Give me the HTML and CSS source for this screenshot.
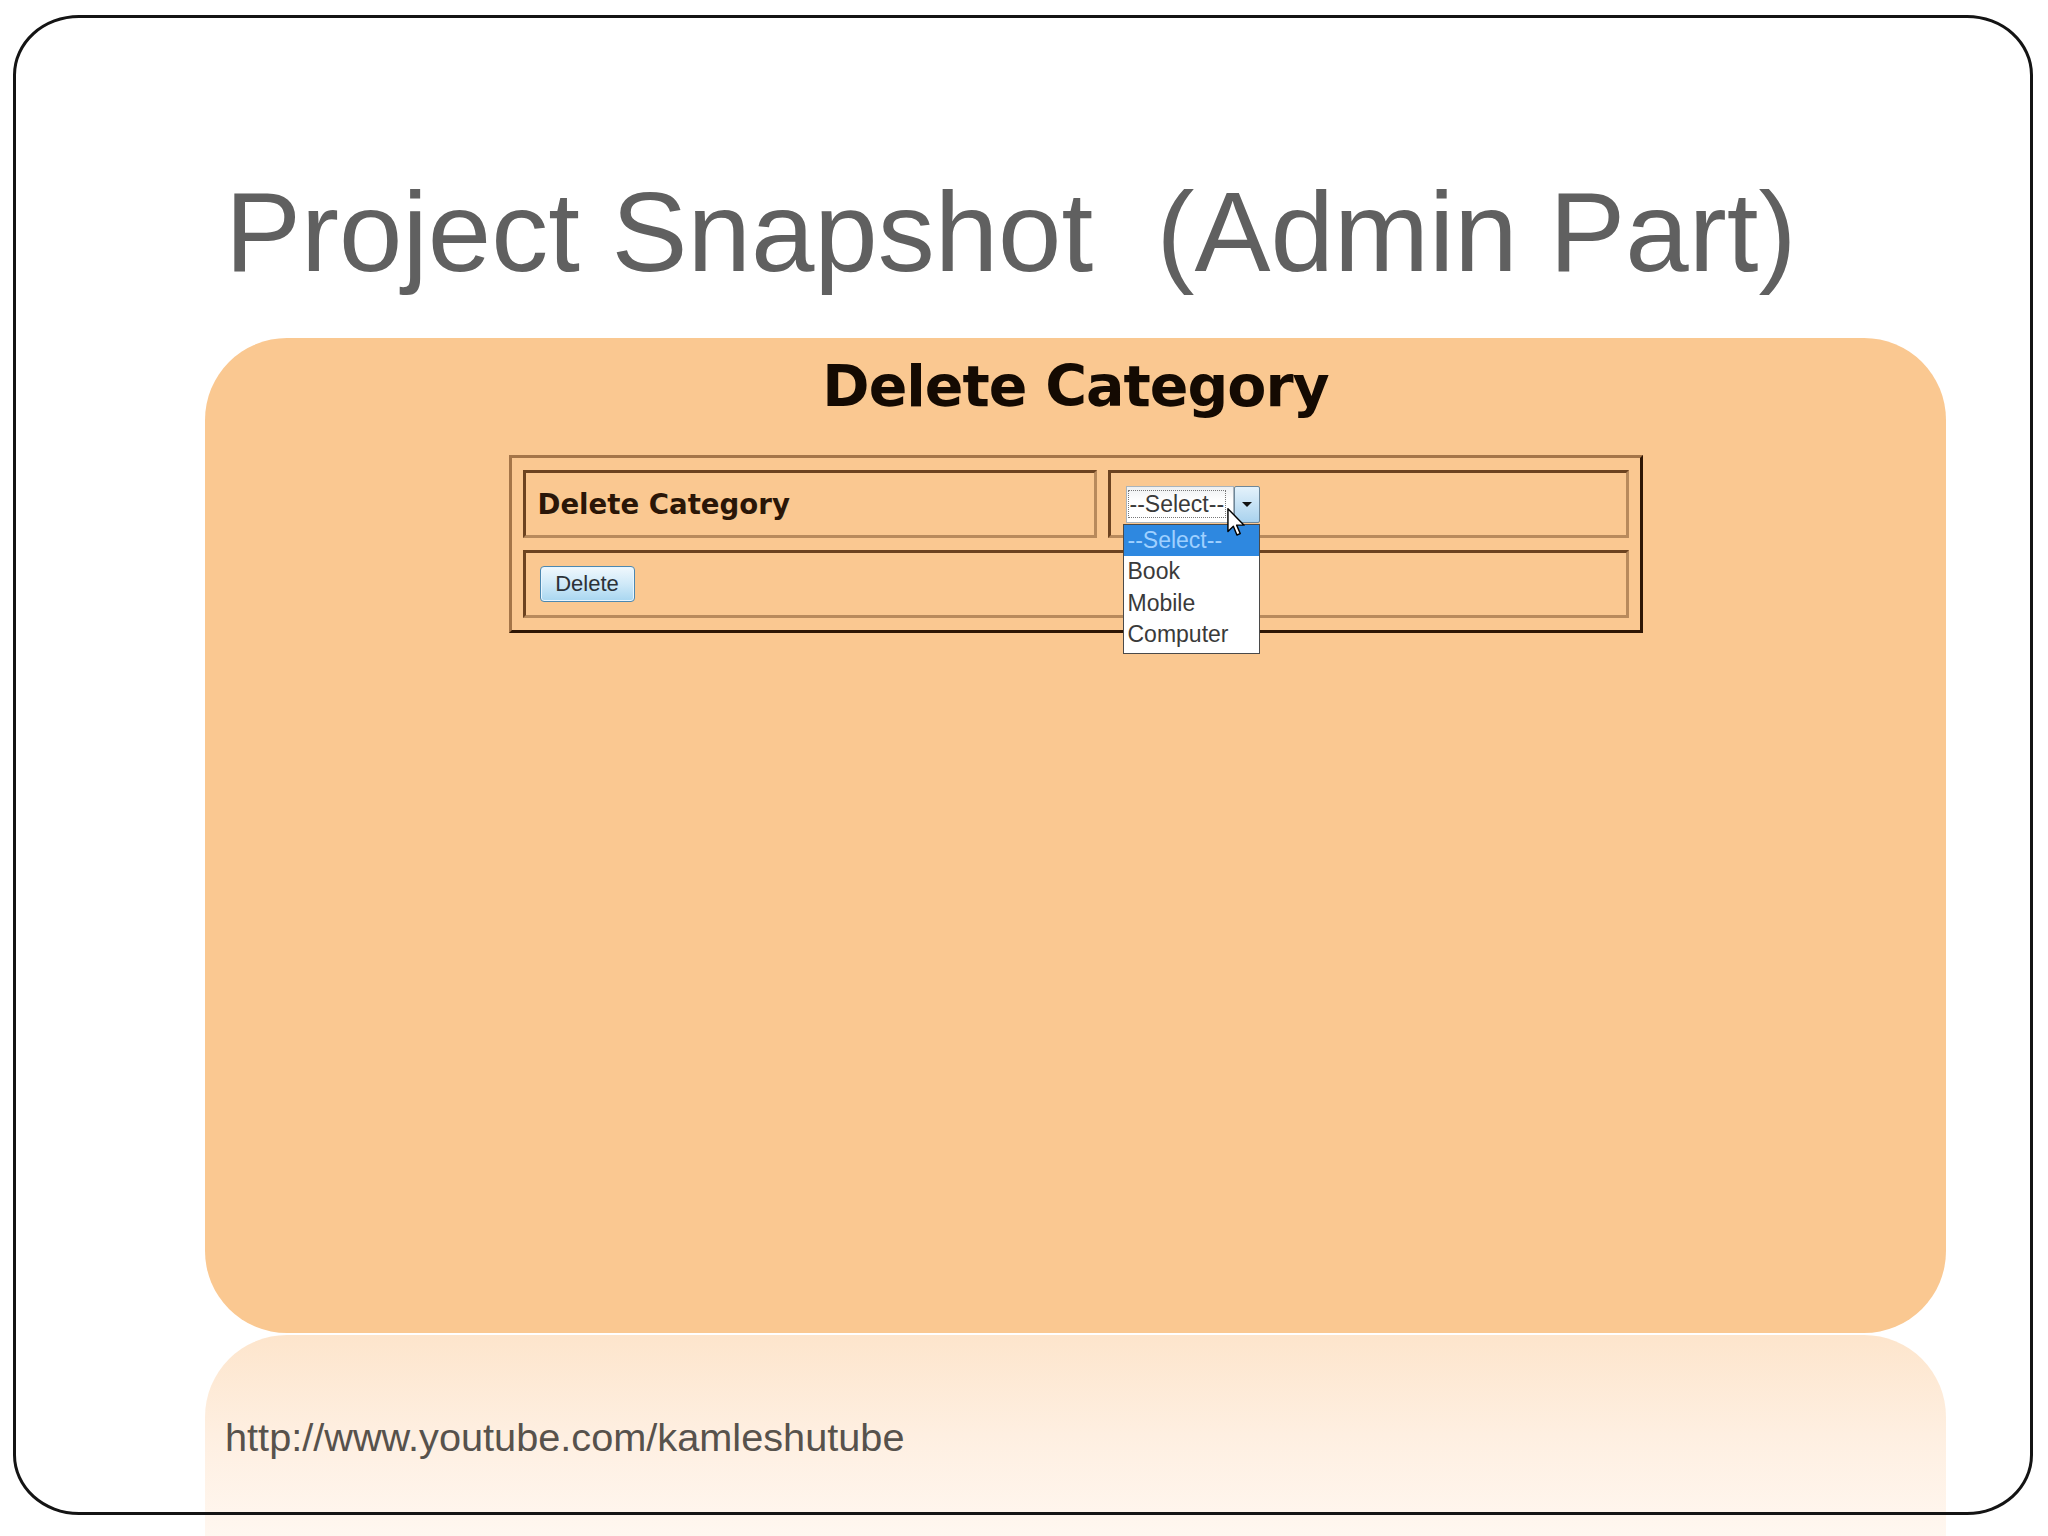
FILE: index.html
```html
<!DOCTYPE html>
<html lang="en">
<head>
<meta charset="utf-8">
<title>Project Snapshot (Admin Part)</title>
<link rel="stylesheet" href="styles.css">
</head>
<body>
<div class="slide">
  <h1 class="title">Project Snapshot  (Admin Part)</h1>
  <div class="picture">
    <h2 class="pic-heading">Delete Category</h2>
    <table class="form-table">
      <tr>
        <td class="cell cell-label">Delete Category</td>
        <td class="cell cell-select">
          <div class="select">
            <div class="select-value"><span class="focus-text">--Select--</span></div>
            <div class="select-arrow"><span class="tri"></span></div>
            <ul class="dropdown">
              <li class="opt opt-active">--Select--</li>
              <li class="opt">Book</li>
              <li class="opt">Mobile</li>
              <li class="opt">Computer</li>
            </ul>
            <svg class="cursor" viewBox="0 0 13 21" width="19" height="30">
              <path d="M0.5 0.5 L0.5 16.5 L4.3 12.8 L6.8 18.9 L9.1 17.9 L6.6 12 L11.8 12 Z" fill="#fff" stroke="#000" stroke-width="1" stroke-linejoin="round"/>
            </svg>
          </div>
        </td>
      </tr>
      <tr>
        <td class="cell cell-btn" colspan="2"><button class="btn" type="button">Delete</button></td>
      </tr>
    </table>
  </div>
  <div class="reflection">
    <p class="url">http://www.youtube.com/kamleshutube</p>
  </div>
</div>
</body>
</html>
```

FILE: styles.css
```css
html, body {
  margin: 0;
  padding: 0;
  background: #ffffff;
}
body {
  width: 2048px;
  height: 1536px;
  overflow: hidden;
  font-family: "Liberation Sans", Arial, sans-serif;
}
.slide {
  position: relative;
  box-sizing: border-box;
  width: 2020px;
  height: 1500px;
  margin: 15px 0 0 13px;
  display: flex;
  flex-direction: column;
  align-items: flex-start;
}
.slide > * {
  flex: none;
}
.slide::after {
  content: "";
  position: absolute;
  inset: 0;
  border: 3px solid #141414;
  border-radius: 66px / 60px;
  pointer-events: none;
  z-index: 2;
}
.title {
  margin: 160px 0 0 212px;
  font-family: "Liberation Sans", Arial, sans-serif;
  font-weight: normal;
  font-size: 114px;
  line-height: 1;
  color: #606060;
  white-space: pre;
}
.picture {
  box-sizing: border-box;
  margin: 49px 0 0 192px;
  width: 1741px;
  height: 995px;
  border-radius: 82px;
  background: #fac891;
  display: flex;
  flex-direction: column;
  align-items: center;
}
.pic-heading {
  margin: 20px 0 0 0;
  font-family: "DejaVu Sans", Verdana, sans-serif;
  font-weight: bold;
  font-size: 57px;
  letter-spacing: -1px;
  line-height: 1;
  color: #140a02;
}
.form-table {
  margin-top: 40px;
  border-collapse: separate;
  border-spacing: 11px 12px;
  border-style: solid;
  border-width: 3px;
  border-color: #a47548 #2e1604 #2e1604 #a47548;
}
.cell {
  box-sizing: border-box;
  height: 68px;
  padding: 0;
  border-style: solid;
  border-width: 3px;
  border-color: #6c4320 #b88a5c #b88a5c #6c4320;
  vertical-align: middle;
}
.cell-label {
  width: 574px;
  padding-left: 12px;
  font-family: "DejaVu Sans", Verdana, sans-serif;
  font-weight: bold;
  font-size: 27.6px;
  color: #2a1608;
}
.cell-select {
  width: 521px;
  padding-left: 15px;
}
.cell-btn {
  padding-left: 14px;
}
.select {
  position: relative;
  display: flex;
  height: 37px;
  width: 134px;
  z-index: 3;
}
.select-value {
  box-sizing: border-box;
  width: 108px;
  height: 37px;
  border: 1px solid #a9b4bd;
  background: linear-gradient(#eef0f2, #ffffff 40%);
  display: flex;
  align-items: center;
  padding-left: 2px;
}
.focus-text {
  font-family: "Liberation Sans", Arial, sans-serif;
  font-size: 23px;
  line-height: 26px;
  color: #3a3a3a;
  outline: 1px dotted #777;
  padding: 0 1px;
}
.select-arrow {
  box-sizing: border-box;
  width: 26px;
  height: 37px;
  border: 1px solid #6e8799;
  border-radius: 2px;
  background: linear-gradient(#e4f2fb, #a9d2ee);
  display: flex;
  align-items: center;
  justify-content: center;
}
.tri {
  width: 0;
  height: 0;
  border-left: 5px solid transparent;
  border-right: 5px solid transparent;
  border-top: 5px solid #111;
}
.dropdown {
  position: absolute;
  left: -3px;
  top: 38px;
  box-sizing: border-box;
  width: 137px;
  height: 130px;
  margin: 0;
  padding: 0;
  list-style: none;
  background: #ffffff;
  border: 1px solid #4a4a4a;
}
.opt {
  height: 31.5px;
  line-height: 31.5px;
  padding-left: 4px;
  font-family: "Liberation Sans", Arial, sans-serif;
  font-size: 23px;
  color: #3a3a3a;
}
.opt-active {
  background: #2e88e0;
  color: #9fd0ff;
}
.cursor {
  position: absolute;
  left: 101px;
  top: 22px;
}
.btn {
  box-sizing: border-box;
  width: 95px;
  height: 36px;
  padding: 0;
  border: 1px solid #4d88b0;
  border-radius: 4px;
  background: linear-gradient(#f0f8fd, #cfe9f8 50%, #a8d6f0);
  box-shadow: inset 0 0 0 1px #e8f6ff;
  font-family: "Liberation Sans", Arial, sans-serif;
  font-size: 22px;
  color: #2c3238;
}
.reflection {
  box-sizing: border-box;
  margin: 2px 0 0 192px;
  width: 1741px;
  height: 201px;
  border-radius: 82px 82px 0 0;
  background: linear-gradient(#fde5cc, #feefe1 50%, #fff7f0);
  padding: 83px 0 0 20px;
}
.url {
  margin: 0;
  font-family: "Liberation Sans", Arial, sans-serif;
  font-size: 39.7px;
  line-height: 1;
  color: #57524c;
}
```
